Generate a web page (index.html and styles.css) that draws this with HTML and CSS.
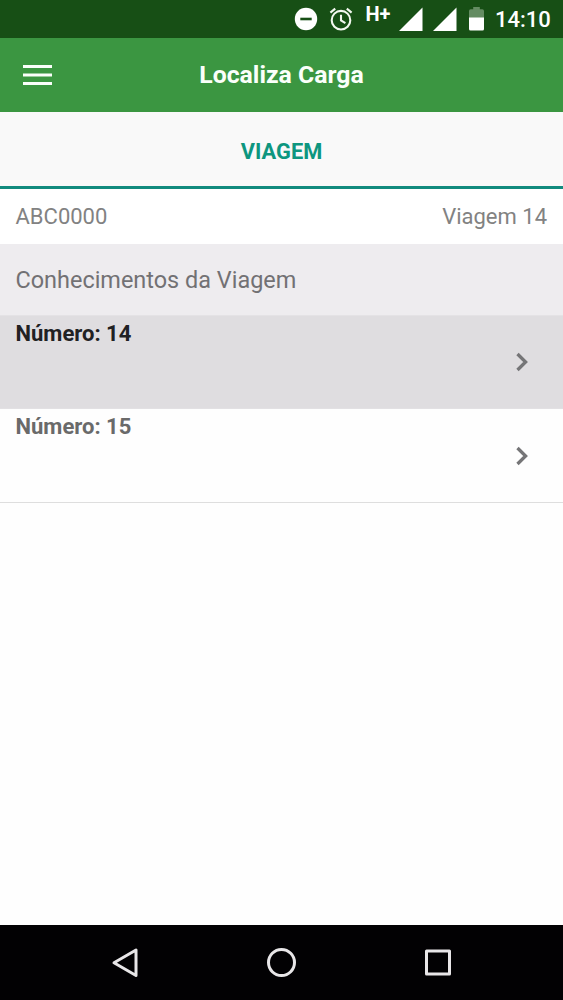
FILE: index.html
```html
<!DOCTYPE html>
<html lang="pt-BR">
<head>
<meta charset="utf-8">
<title>Localiza Carga</title>
<link rel="stylesheet" href="styles.css">
</head>
<body>
<div class="screen">
  <div class="status">
    <svg class="dnd" width="24" height="24" viewBox="0 0 24 24"><circle cx="12" cy="12" r="11.2" fill="#fff"/><path d="M6.3 12h11.4" stroke="#174f15" stroke-width="2.6"/></svg>
    <svg class="alarm" width="24" height="24" viewBox="0 0 24 24" fill="none" stroke="#f2f8ef" stroke-width="2.1"><circle cx="12" cy="13.2" r="9.3"/><path d="M12 7.7v5.8l4.4 2.7M1.4 5.6l4.8-4M22.6 5.600l-4.800-4"/></svg>
    <span class="network">H+</span>
    <svg class="signal" width="24" height="24" viewBox="0 0 24 24"><path d="M0 24 23.500.500V24z" fill="#fff"/></svg>
    <svg class="signal second" width="24" height="24" viewBox="0 0 24 24"><path d="M0 24 23.500.500V24z" fill="#fff"/></svg>
    <svg class="battery" width="15" height="24" viewBox="0 0 15 24"><path d="M0 11V4q0-1.700 1.700-1.700h2.500V0h6.600v2.300h2.500Q15 2.300 15 4v7z" fill="#648c62"/><path d="M0 10.500h15V22q0 1.500-1.500 1.500h-12Q0 23.500 0 22z" fill="#fff"/></svg>
    <span class="clock">14:10</span>
  </div>
  <header class="header">
    <svg class="menu" width="29" height="22" viewBox="0 0 29 22"><path d="M0 2.500h29M0 11h29M0 19.500h29" stroke="#fafffa" stroke-width="3"/></svg>
    <h1 class="title">Localiza Carga</h1>
  </header>
  <div class="tab"><span class="tab-label">VIAGEM</span></div>
  <div class="trip"><span class="plate">ABC0000</span><span class="trip-no">Viagem 14</span></div>
  <div class="section"><span class="section-label">Conhecimentos da Viagem</span></div>
  <ul class="list">
    <li class="item active"><span class="number">Número: 14</span><svg class="chevron" width="12" height="20" viewBox="0 0 12 20"><path d="M1.500 2 9.600 10 1.500 18" fill="none" stroke="#757577" stroke-width="3.300"/></svg></li>
    <li class="item"><span class="number">Número: 15</span><svg class="chevron" width="12" height="20" viewBox="0 0 12 20"><path d="M1.500 2 9.600 10 1.500 18" fill="none" stroke="#757577" stroke-width="3.300"/></svg></li>
  </ul>
  <nav class="nav">
    <svg width="30" height="32" viewBox="0 0 30 32"><path d="M26 3v25.500L4 15.700z" fill="none" stroke="#e8e6e8" stroke-width="3" stroke-linejoin="round"/></svg>
    <svg width="30" height="32" viewBox="0 0 30 32"><circle cx="14.500" cy="15.500" r="13" fill="none" stroke="#e8e6e8" stroke-width="3"/></svg>
    <svg width="30" height="32" viewBox="0 0 30 32"><rect x="3.500" y="4" width="23" height="23" fill="none" stroke="#e8e6e8" stroke-width="3" stroke-linejoin="round"/></svg>
  </nav>
</div>
</body>
</html>
```
FILE: styles.css
```css
* { box-sizing: border-box; }
body { margin: 0; font-family: Roboto, "Liberation Sans", sans-serif; background: #fefefe; }
svg { display: block; flex: none; }
.screen { width: 563px; height: 1000px; display: flex; flex-direction: column; overflow: hidden; }
.status { height: 38px; flex: none; display: flex; align-items: flex-start; justify-content: flex-end; padding: 7px 13px 0 0; background: #174f15; color: #fff; }
.alarm { margin-left: 10.500px; }
.network { width: 26px; margin: -4px 0 0 13px; font-size: 20px; line-height: 22px; font-weight: 700; white-space: nowrap; }
.signal { margin-left: 7px; }
.signal.second { margin-left: 10px; }
.battery { margin-left: 12.500px; }
.clock { width: 55px; margin-left: 11px; font-size: 22px; line-height: 26px; font-weight: 500; white-space: nowrap; }
.header { height: 74px; flex: none; display: grid; grid-template-columns: 52px 1fr 52px; align-items: center; background: #3b9641; }
.menu { margin-left: 23px; }
.title { margin: 0; text-align: center; font-size: 24.800px; line-height: 30px; font-weight: 700; color: #fafffa; }
.tab { height: 77px; flex: none; display: flex; align-items: center; justify-content: center; padding-top: 6px; background: #f9f9f9; border-bottom: 3px solid #128b7e; }
.tab-label { font-size: 21.800px; line-height: 28px; font-weight: 700; color: #0d967f; }
.trip { height: 55px; flex: none; display: flex; align-items: center; justify-content: space-between; padding: 0 16px 0 15.500px; background: #fff; color: #828282; font-size: 22px; }
.section { height: 71px; flex: none; display: flex; align-items: center; background: #eeecef; padding: 0 15.500px; color: #727174; font-size: 23.450px; }
.list { margin: 0; padding: 0; list-style: none; flex: 1; background: #fefefe; }
.item { height: 94px; display: flex; align-items: center; justify-content: space-between; padding: 0 35px 0 15.500px; border-bottom: 1px solid #dedede; color: #6a6a6a; }
.item.active { border-top: 1px solid #e4e2e5; background: #dfdde0; border-bottom-color: #e2e0e3; color: #212123; }
.number { align-self: flex-start; margin-top: 4px; font-size: 22px; line-height: 28px; font-weight: 700; }
.nav { height: 75px; flex: none; display: flex; justify-content: space-between; align-items: center; padding: 0 110px; background: #020103; }
```
